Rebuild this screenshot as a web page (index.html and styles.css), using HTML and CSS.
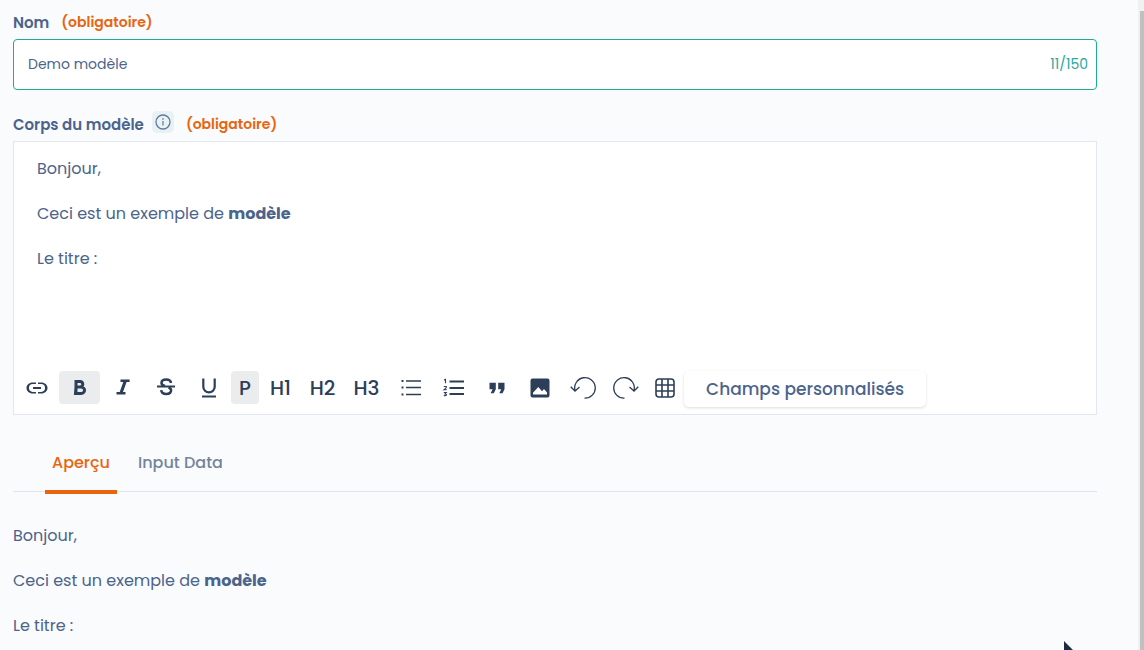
FILE: index.html
```html
<!DOCTYPE html>
<html lang="fr">
<head>
<meta charset="utf-8">
<meta name="viewport" content="width=device-width, initial-scale=1">
<title>Modèle</title>
<link rel="stylesheet" href="styles.css">
</head>
<body>
<main class="page">
  <form class="form">
    <div class="label-row">
      <label class="label" for="name">Nom</label>
      <span class="required">(obligatoire)</span>
    </div>
    <div class="field">
      <input class="field-input" id="name" type="text" value="Demo modèle" maxlength="150">
      <span class="counter">11/150</span>
    </div>

    <div class="label-row label-row-body">
      <span class="label" id="body-label">Corps du modèle</span>
      <button class="info" type="button" aria-label="Information">
        <svg width="16" height="16" viewBox="0 0 16 16" fill="none" stroke="currentColor"><circle cx="8" cy="8" r="7" stroke-width="1.3"/><path d="M8 7v4.5" stroke-width="1.2"/><path d="M8 4.3v1.4" stroke-width="1.4"/></svg>
      </button>
      <span class="required">(obligatoire)</span>
    </div>
    <div class="editor">
      <div class="editor-body prose" contenteditable="true" role="textbox" aria-labelledby="body-label" spellcheck="false">
        <p>Bonjour,</p>
        <p>Ceci est un exemple de <strong>modèle</strong></p>
        <p>Le titre :</p>
      </div>
      <div class="toolbar" role="toolbar" aria-label="Mise en forme">
        <button class="tool" type="button" aria-label="Lien">
          <svg width="24" height="24" viewBox="0 0 24 24" fill="currentColor"><path d="M3.9 12c0-2.3 1.6-3.9 3.9-3.9H11V6.5H7.5C4.300 6.500 1.500 8.900 1.500 12s2.800 5.500 6 5.500H11v-1.600H7.800C5.500 15.900 3.900 14.300 3.900 12zM8 12.900h8v-1.800H8v1.800zM16.500 6.500H13v1.600h3.200c2.300 0 3.900 1.600 3.900 3.900s-1.600 3.900-3.900 3.900H13v1.600h3.500c3.200 0 6-2.400 6-5.500s-2.800-5.500-6-5.500z"/></svg>
        </button>
        <button class="tool active" type="button" aria-label="Gras" aria-pressed="true">
          <svg width="24" height="24" viewBox="0 0 24 24" fill="none" stroke="currentColor" stroke-width="3"><path d="M7.500 5.500h5a2.800 2.800 0 0 1 0 5.500H8M8 11h5.300a3.200 3.200 0 0 1 0 6.500H7.500zM8 4v15"/></svg>
        </button>
        <button class="tool" type="button" aria-label="Italique">
          <svg width="24" height="24" viewBox="0 0 24 24" fill="currentColor"><path d="M9.500 3.500v2.600h2.800L8.700 16H5.500v2.600h9V16H12l3.600-9.900h3V3.500z"/></svg>
        </button>
        <button class="tool" type="button" aria-label="Barré">
          <svg width="24" height="24" viewBox="0 0 24 24" fill="none" stroke="currentColor"><path d="M17 7c-.3-2.200-2-3.500-4.700-3.500-2.900 0-4.800 1.300-4.800 3.400 0 1.800 1.300 2.500 3.500 3.100M14.500 11.500c1.700.6 2.600 1.500 2.600 2.800 0 2.300-1.900 3.700-4.800 3.700-2.800 0-4.900-1.400-5.100-3.800" stroke-width="2.500"/><path d="M3 10.500h18" stroke-width="2"/></svg>
        </button>
        <button class="tool" type="button" aria-label="Souligné">
          <svg width="24" height="24" viewBox="0 0 24 24" fill="none" stroke="currentColor" stroke-width="2.200"><path d="M6.300 2.500v8.200a5.700 5.700 0 0 0 11.400 0V2.500"/><path d="M5 20.500h14" stroke-width="2"/></svg>
        </button>
        <button class="tool tool-p active" type="button" aria-pressed="true">P</button>
        <button class="tool tool-h" type="button">H1</button>
        <button class="tool" type="button">H2</button>
        <button class="tool tool-h3" type="button">H3</button>
        <button class="tool" type="button" aria-label="Liste à puces">
          <svg width="24" height="24" viewBox="0 0 24 24" fill="none" stroke="currentColor" stroke-width="1.600"><path d="M7 5h15M7 11.500h15M7 18.500h15"/><path d="M2.500 5h2M2.500 11.500h2M2.500 18.500h2" stroke-width="2.200"/></svg>
        </button>
        <button class="tool" type="button" aria-label="Liste numérotée">
          <svg width="24" height="24" viewBox="0 0 24 24" fill="none" stroke="currentColor"><path d="M7.500 5.500H22M7.500 12H22M7.500 18H22" stroke-width="2"/><path d="M2 4l1.500-.7v4M1.800 10.500h2.400v1.300L2 13.700h2.700M1.800 16.500h2.500L3 18c2.400 0 1.800 2.200-1.200 1.500" stroke-width="1.100"/></svg>
        </button>
        <button class="tool" type="button" aria-label="Citation">
          <svg width="24" height="24" viewBox="0 0 24 24" fill="currentColor"><path d="M4.500 6.700h6.300v6.600l-2 4H5.600l2-4H4.500zM13.200 6.700h6.300v6.600l-2 4h-3.200l2-4h-3.100z"/></svg>
        </button>
        <button class="tool" type="button" aria-label="Image">
          <svg width="24" height="24" viewBox="0 0 24 24" fill="currentColor" fill-rule="evenodd"><path d="M4.500 2.500h15a2 2 0 0 1 2 2v15a2 2 0 0 1-2 2h-15a2 2 0 0 1-2-2v-15a2 2 0 0 1 2-2zM5 18.500h14v-2l-3-3.500-2 2.300L10.300 11 5 16.800z"/></svg>
        </button>
        <button class="tool" type="button" aria-label="Annuler">
          <svg width="26" height="24" viewBox="0 0 26 24" fill="none" stroke="currentColor" stroke-width="1.300"><path d="M5 14.500A10.300 10.300 0 1 1 14.500 22.200M.7 10.700L5 15l4.500-4"/></svg>
        </button>
        <button class="tool" type="button" aria-label="Rétablir">
          <svg width="26" height="24" viewBox="0 0 26 24" fill="none" stroke="currentColor" stroke-width="1.300"><path d="M21 14.500A10.300 10.300 0 1 0 11.500 22.200M25.300 10.700L21 15l-4.500-4"/></svg>
        </button>
        <button class="tool tool-table" type="button" aria-label="Tableau">
          <svg width="20" height="20" viewBox="0 0 20 20" fill="none" stroke="currentColor" stroke-width="1.600"><rect x="1" y="1" width="18" height="18" rx="3"/><path d="M7 1v18M13 1v18M1 7h18M1 13h18"/></svg>
        </button>
        <button class="custom" type="button">Champs personnalisés</button>
      </div>
    </div>
  </form>

  <div class="tabs" role="tablist">
    <button class="tab selected" type="button" role="tab" aria-selected="true">Aperçu</button>
    <button class="tab" type="button" role="tab" aria-selected="false">Input Data</button>
  </div>
  <section class="preview prose">
    <p>Bonjour,</p>
    <p>Ceci est un exemple de <strong>modèle</strong></p>
    <p>Le titre :</p>
  </section>
</main>
<div class="scroll-track" aria-hidden="true"><div class="scroll-thumb"></div></div>
<svg class="pointer" width="12" height="18" viewBox="0 0 12 18" aria-hidden="true"><path d="M0 0v16l4-4h8z" fill="#1f2b40"/></svg>
</body>
</html>
```
FILE: styles.css
```css
* { box-sizing: border-box; }

body {
  display: flex;
  height: 100vh;
  margin: 0;
  overflow: hidden;
  background: #fafbfd;
  color: #4b648c;
  font-family: Poppins, Inter, "Open Sans", sans-serif;
  font-size: 16px;
}

button, input { font: inherit; color: inherit; }

button {
  padding: 0;
  border: 0;
  background: none;
  cursor: pointer;
}

.page {
  flex: 1;
  min-width: 0;
  padding: 11px 41px 0 13px;
}

.label-row {
  display: flex;
  align-items: center;
  height: 22px;
}

.label-row-body {
  height: 26px;
  margin: 21px 0 4px;
}

.label {
  font-size: 15px;
  font-weight: 600;
}

.required {
  margin-left: 12px;
  color: #e8650d;
  font-size: 14px;
  font-weight: 600;
}

.info {
  display: grid;
  place-items: center;
  align-self: flex-start;
  width: 22px;
  height: 22px;
  margin-left: 8px;
  border-radius: 5px;
  background: #e6f2f3;
  color: #64789c;
}

.field {
  display: flex;
  align-items: center;
  height: 51px;
  margin-top: 6px;
  padding: 0 8px 0 14px;
  border: 1px solid #1fad8d;
  border-radius: 4px;
  background: #fff;
}

.field-input {
  flex: 1;
  min-width: 0;
  padding: 0;
  border: 0;
  outline: 0;
  background: none;
  font-size: 14px;
}

.counter {
  color: #2ba79e;
  font-size: 14px;
}

.editor {
  border: 1px solid #e2e8f1;
  background: #fff;
}

.editor-body {
  min-height: 229px;
  padding: 15px 23px;
  outline: 0;
}

.prose p {
  margin: 0 0 21px;
  line-height: 24px;
}

.prose strong { font-weight: 700; }

.toolbar {
  display: flex;
  flex-wrap: wrap;
  gap: 2px;
  padding: 0 2px 7px;
  color: #2d3e58;
}

.tool {
  display: grid;
  place-items: center;
  width: 41px;
  height: 33px;
  border-radius: 4px;
  font-size: 20px;
  font-weight: 500;
}

.tool-p { width: 28px; }
.tool-h { width: 39px; }
.tool-h3 { width: 43px; }
.tool-table { width: 34px; }
.active { background: #ebecee; }

.custom {
  height: 36px;
  padding: 0 22px;
  border-radius: 5px;
  box-shadow: 0 1px 3px #00000024;
  color: #4b648c;
  font-size: 17px;
  font-weight: 500;
  line-height: 24px;
}

.tabs {
  display: flex;
  gap: 14px;
  margin-top: 16px;
  padding: 0 32px;
  border-bottom: 1px solid #e0e3e9;
}

.tab {
  height: 63px;
  margin-bottom: -3px;
  padding: 4px 7px 0;
  border-bottom: 4px solid transparent;
  color: #73849c;
  font-weight: 500;
}

.selected {
  border-color: #e8650d;
  color: #e8650d;
}

.preview { padding-top: 32px; }

.scroll-track {
  flex: none;
  width: 6px;
  padding: 11px 0 0 2px;
  background: #f0f1f1;
}

.scroll-thumb {
  height: 100%;
  background: #c0c0c0;
}

.pointer {
  position: absolute;
  bottom: -9px;
  left: 93%;
}
```
